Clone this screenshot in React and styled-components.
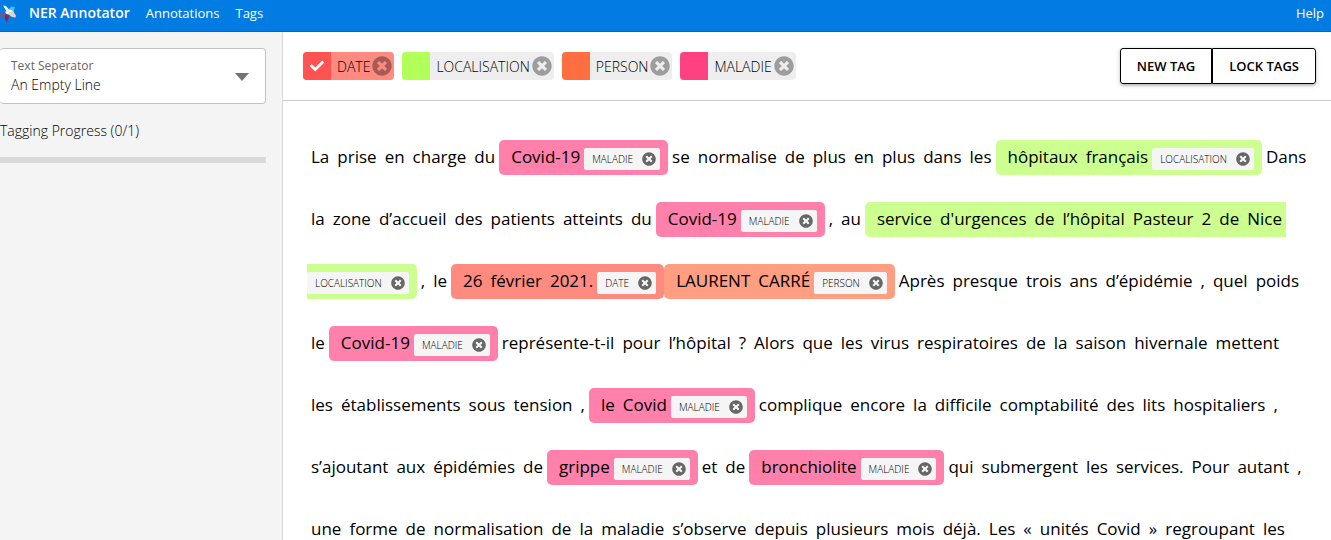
import React from "react";
import styled, { createGlobalStyle } from "styled-components";
import { FaTimesCircle, FaCheck } from "react-icons/fa";

const GlobalStyle = createGlobalStyle`
  * { box-sizing: border-box; }
  html, body, #root { height: 100%; }
  body {
    margin: 0;
    overflow: hidden;
    background: #fff;
    color: #000;
    font-family: "Open Sans", "Noto Sans", sans-serif;
    font-size: 14px;
    font-weight: 300;
  }
  button, select { font-family: inherit; }
`;

const Page = styled.div`
  display: flex;
  flex-direction: column;
  min-height: 100%;
`;

const TopBar = styled.header`
  display: flex;
  align-items: center;
  height: 32px;
  padding: 0 7px 6px 0;
  background: #027be3;
  border-bottom: 1px solid #0269c8;
`;

const Menu = styled.nav`
  display: flex;
  flex: 1;
  gap: 16px;
  margin-left: 9px;
`;

const MenuLink = styled.a`
  color: #fff;
  font-size: ${(p) => (p.$strong ? 14 : 13)}px;
  line-height: 20px;
  font-weight: ${(p) => (p.$strong ? 600 : 400)};
  text-decoration: none;
`;

const Body = styled.div`
  display: flex;
  flex: 1;
`;

const Sidebar = styled.aside`
  flex: 0 0 283px;
  padding: 16px 16px 0 0;
  background: #f4f4f4;
  border-right: 1px solid #d8d8d8;
`;

const Field = styled.div`
  position: relative;
  height: 56px;
  background: #fff;
  border: 1px solid #c2c2c2;
  border-left: 0;
  border-radius: 4px;
`;

const FieldLabel = styled.label`
  position: absolute;
  top: 8px;
  left: 11px;
  color: #666;
  font-size: 12px;
  font-weight: 400;
  line-height: 18px;
  pointer-events: none;
`;

const Select = styled.select`
  width: 100%;
  height: 100%;
  padding: 16px 40px 0 11px;
  appearance: none;
  border: 0;
  border-radius: 4px;
  background: transparent;
  color: #000;
  font-size: 14px;
  font-weight: 300;
`;

const Caret = styled.svg`
  position: absolute;
  top: 24px;
  right: 16px;
  pointer-events: none;
`;

const ProgressLabel = styled.p`
  margin: 17px 0 16px;
  font-size: 14px;
  line-height: 20px;
`;

const ProgressTrack = styled.div`
  height: 6px;
  background: #dadada;
`;

const Main = styled.main`
  flex: 1;
  min-width: 0;
`;

const Toolbar = styled.div`
  display: flex;
  align-items: center;
  justify-content: space-between;
  height: 69px;
  padding: 0 15px 0 20px;
  border-bottom: 1px solid #ccc;
`;

const Chips = styled.div`
  display: flex;
  gap: 8px;
`;

const Chip = styled.div`
  display: flex;
  align-items: center;
  height: 28px;
  padding-right: 2px;
  overflow: hidden;
  border-radius: 4px;
  background: ${(p) => p.$fill};
  color: #000;
  font-size: 14px;
`;

const Swatch = styled.button`
  display: grid;
  place-items: center;
  width: 28px;
  height: 28px;
  margin-right: 6px;
  padding: 0;
  border: 0;
  background: ${(p) => p.$color};
  color: #fff;
  font-size: 14px;
`;

const ChipRemove = styled.button`
  display: flex;
  margin-left: 2px;
  padding: 0;
  border: 0;
  background: none;
  color: #000;
  opacity: 0.34;
  font-size: 20px;
`;

const ButtonGroup = styled.div`
  display: flex;
  border-radius: 3px;
  box-shadow: 0 1px 5px rgba(0, 0, 0, 0.2), 0 2px 2px rgba(0, 0, 0, 0.14);
`;

const Action = styled.button`
  height: 36px;
  padding: 0 16px;
  border: 1px solid #000;
  background: #fff;
  color: #000;
  font-size: 13px;
  font-weight: 600;
  &:first-child { border-radius: 3px 0 0 3px; }
  &:last-child { border-radius: 0 3px 3px 0; }
`;

const Text = styled.p`
  margin: 0;
  padding: 25px 24px 0;
  font-size: 17px;
  font-weight: 400;
  line-height: 62px;
  white-space: nowrap;
`;

const Token = styled.span`
  padding: 0 4px;
`;

const Mark = styled.mark`
  padding: 5px 8px 7px;
  border-radius: 5px;
  background: ${(p) => p.$color};
  color: #000;
`;

const MarkLabel = styled.span`
  display: inline-flex;
  align-items: center;
  height: 22px;
  padding: 0 4px 0 8px;
  gap: 9px;
  border-radius: 2px;
  background: #f5f5f5;
  font-size: 10px;
  font-weight: 300;
  line-height: 22px;
  vertical-align: baseline;
`;

const MarkRemove = styled.button`
  display: flex;
  padding: 0;
  border: 0;
  background: none;
  color: #666;
  font-size: 14px;
`;

const TAGS = {
  DATE: { solid: "#ff5252", soft: "#ff8a80" },
  LOCALISATION: { solid: "#b2ff59", soft: "#ccff90" },
  PERSON: { solid: "#ff6e40", soft: "#ff9e80" },
  MALADIE: { solid: "#ff4081", soft: "#ff80ab" },
};

const BREAK = { br: true };
const LINES = [
  "La prise en charge du",
  { tag: "MALADIE", text: "Covid-19" },
  "se normalise de plus en plus dans les",
  { tag: "LOCALISATION", text: "hôpitaux français" },
  "Dans",
  BREAK,
  "la zone d’accueil des patients atteints du",
  { tag: "MALADIE", text: "Covid-19" },
  ", au",
  { tag: "LOCALISATION", text: "service d'urgences de l’hôpital Pasteur 2 de Nice", wrap: true },
  ", le",
  { tag: "DATE", text: "26 février 2021." },
  { tag: "PERSON", text: "LAURENT CARRÉ" },
  "Après presque trois ans d’épidémie , quel poids",
  BREAK,
  "le",
  { tag: "MALADIE", text: "Covid-19" },
  "représente-t-il pour l’hôpital ? Alors que les virus respiratoires de la saison hivernale mettent",
  BREAK,
  "les établissements sous tension ,",
  { tag: "MALADIE", text: "le Covid" },
  "complique encore la difficile comptabilité des lits hospitaliers ,",
  BREAK,
  "s’ajoutant aux épidémies de",
  { tag: "MALADIE", text: "grippe" },
  "et de",
  { tag: "MALADIE", text: "bronchiolite" },
  "qui submergent les services. Pour autant ,",
  BREAK,
  "une forme de normalisation de la maladie s’observe depuis plusieurs mois déjà. Les « unités Covid » regroupant les",
];

const Words = ({ text }) => text.split(" ").map((w, i) => <Token key={i}>{w}</Token>);

const Entity = ({ tag, text, wrap }) => (
  <Mark $color={TAGS[tag].soft}>
    <Words text={text} />
    {wrap && <br />}
    <MarkLabel>
      {tag}
      <MarkRemove aria-label={`Remove ${tag}`}><FaTimesCircle /></MarkRemove>
    </MarkLabel>
  </Mark>
);

const Logo = () => (
  <svg width="20" height="25" viewBox="0 0 20 25" aria-hidden="true">
    <path d="M9 9l2-2.500 4 .5-1.500 5-3 1z" fill="#3fc3e8" />
    <path d="M3 5.500l3 .5 3 3.500 3 .5 2 3-4 2-5-1.500 1-3z" fill="#f1f3f2" />
    <path d="M9 12l4-.5 3 4-.5 2-3.500-.5-3-2z" fill="#e2d3c2" />
    <path d="M0 14l5-1.500 2 2-3 2.500-4-.5z" fill="#7b5190" />
    <path d="M5 14.500l4.500.5-1.500 4-1.500 3.500-1.500-4z" fill="#8f2444" />
  </svg>
);

export default function App() {
  return (
    <Page>
      <GlobalStyle />
      <TopBar>
        <Logo />
        <Menu>
          <MenuLink href="#" $strong>NER Annotator</MenuLink>
          <MenuLink href="#">Annotations</MenuLink>
          <MenuLink href="#">Tags</MenuLink>
        </Menu>
        <MenuLink href="#">Help</MenuLink>
      </TopBar>
      <Body>
        <Sidebar>
          <Field>
            <FieldLabel htmlFor="separator">Text Seperator</FieldLabel>
            <Select id="separator" defaultValue="empty">
              <option value="empty">An Empty Line</option>
            </Select>
            <Caret width="14" height="8" viewBox="0 0 14 8"><path d="M0 0h14L7 8z" fill="#757575" /></Caret>
          </Field>
          <ProgressLabel>Tagging Progress (0/1)</ProgressLabel>
          <ProgressTrack role="progressbar" aria-label="Tagging progress" aria-valuenow={0} aria-valuemax={1} />
        </Sidebar>
        <Main>
          <Toolbar>
            <Chips>
              {Object.entries(TAGS).map(([name, c], i) => (
                <Chip key={name} $fill={i === 0 ? c.soft : "#eee"}>
                  <Swatch $color={c.solid} aria-label={`Select ${name}`}>{i === 0 && <FaCheck />}</Swatch>
                  {name}
                  <ChipRemove aria-label={`Delete ${name}`}><FaTimesCircle /></ChipRemove>
                </Chip>
              ))}
            </Chips>
            <ButtonGroup>
              <Action>NEW TAG</Action>
              <Action>LOCK TAGS</Action>
            </ButtonGroup>
          </Toolbar>
          <Text>
            {LINES.map((item, i) => {
              if (item.br) return <br key={i} />;
              if (typeof item === "string") return <Words key={i} text={item} />;
              return <Entity key={i} {...item} />;
            })}
          </Text>
        </Main>
      </Body>
    </Page>
  );
}
